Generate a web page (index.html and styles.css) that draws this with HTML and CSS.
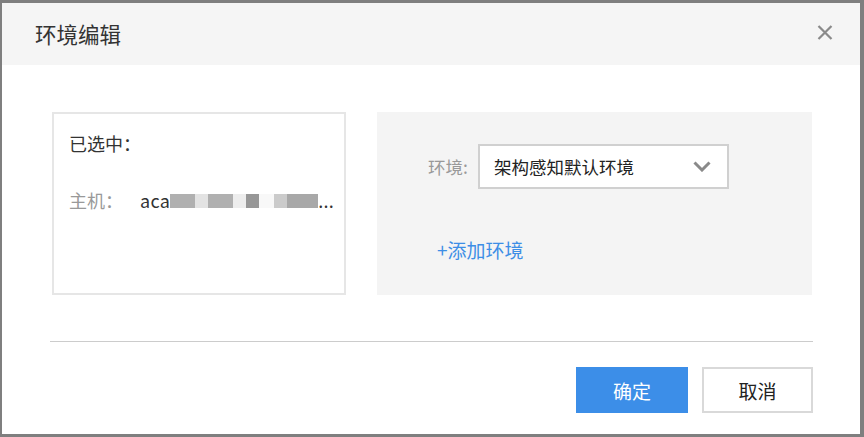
FILE: index.html
```html
<!DOCTYPE html>
<html>
	<head>
		<meta charset="UTF-8">
		<title>环境编辑</title>
		<link rel="stylesheet" href="styles.css">
	</head>
	<body>
		<div class="dialog">
			<div class="dlg-head">
				<span class="dlg-title">环境编辑</span>
				<span class="dlg-close">
					<svg width="16" height="15" viewBox="0 0 16 15"><path d="M1.5 1 L14.5 14 M14.5 1 L1.5 14" stroke="#8a8a8a" stroke-width="2.2" fill="none"/></svg>
				</span>
			</div>
			<div class="dlg-body">
				<div class="sel-box">
					<div class="sel-title">已选中：</div>
					<div class="host-row">
						<span class="host-label">主机：</span>
						<span class="host-val">aca<span class="mosaic"><i class="m1"></i><i class="m2"></i><i class="m1"></i><i class="m3"></i><i class="m4"></i><i class="m5"></i><i class="m6"></i><i class="m7"></i></span>...</span>
					</div>
				</div>
				<div class="env-panel">
					<div class="env-row">
						<span class="env-label">环境:</span>
						<div class="env-select">
							<span>架构感知默认环境</span>
							<svg width="18" height="11" viewBox="0 0 18 11"><path d="M1.5 1.5 L9 9 L16.5 1.5" stroke="#8a8a8a" stroke-width="3" fill="none"/></svg>
						</div>
					</div>
					<a class="add-env" href="#">+添加环境</a>
				</div>
			</div>
			<div class="dlg-foot">
				<input type="button" class="btn btn-ok" value="确定" />
				<input type="button" class="btn btn-cancel" value="取消" />
			</div>
		</div>
	</body>
</html>
```

FILE: styles.css
```css
html, body {
	margin: 0;
	padding: 0;
}

body {
	font-family: "Noto Sans CJK SC", "Liberation Sans", sans-serif;
	color: #333;
}

.dialog {
	width: 864px;
	height: 437px;
	box-sizing: border-box;
	border-style: solid;
	border-color: #7f7f7f;
	border-width: 3px 4px 3px 2px;
	background-color: #fff;
}

.dlg-head {
	height: 62px;
	background-color: #f5f5f5;
	display: flex;
	align-items: center;
	justify-content: space-between;
	padding: 0 27px 0 33px;
}

.dlg-title {
	font-size: 21.5px;
	color: #333;
	margin-top: -1px;
}

.dlg-close {
	display: flex;
	margin-top: -3px;
}

.dlg-body {
	display: flex;
	gap: 31px;
	padding: 47px 48px 0 50px;
}

.sel-box {
	width: 294px;
	height: 183px;
	box-sizing: border-box;
	border: 2px solid #e6e6e6;
	padding: 17px 0 0 15px;
	font-size: 18px;
	line-height: 24px;
}

.host-row {
	display: flex;
	margin-top: 33px;
}

.host-label {
	width: 71px;
	color: #999;
	flex-shrink: 0;
}

.host-val {
	display: flex;
	align-items: center;
	color: #333;
	letter-spacing: 0.3px;
}

.mosaic {
	display: flex;
	height: 14px;
	margin-top: 1px;
}

.mosaic i {
	display: block;
	height: 14px;
}

.m1 { width: 25px; background-color: #b0b0b0; }
.m2 { width: 13px; background-color: #e3e3e3; }
.m3 { width: 13px; background-color: #ededed; }
.m4 { width: 13px; background-color: #979797; }
.m5 { width: 15px; background-color: #f8f8f8; }
.m6 { width: 13px; background-color: #cbcbcb; }
.m7 { width: 31px; background-color: #a8a8a8; }

.env-panel {
	flex: 1;
	height: 183px;
	background-color: #f4f4f4;
	padding-top: 32px;
	box-sizing: border-box;
}

.env-row {
	display: flex;
	align-items: center;
	padding-left: 51px;
}

.env-label {
	width: 50px;
	font-size: 17.5px;
	color: #999;
}

.env-select {
	width: 251px;
	height: 45px;
	box-sizing: border-box;
	border: 2px solid #d0d0d0;
	background-color: #fff;
	display: flex;
	align-items: center;
	justify-content: space-between;
	padding: 0 16px 0 14px;
	font-size: 17.5px;
	color: #222;
}

.env-select svg {
	margin-top: -1px;
}

.add-env {
	display: block;
	margin: 49px 0 0 60px;
	font-size: 19px;
	line-height: 24px;
	color: #3d8ee6;
	text-decoration: none;
}

.dlg-foot {
	margin: 46px 47px 0 48px;
	border-top: 1px solid #cccccc;
	padding-top: 25px;
	display: flex;
	justify-content: flex-end;
	gap: 14px;
}

.btn {
	width: 112px;
	height: 46px;
	box-sizing: border-box;
	font-family: "Noto Sans CJK SC", "Liberation Sans", sans-serif;
	font-size: 19px;
	margin: 0;
	padding: 0;
}

.btn-ok {
	background-color: #3c8ee8;
	border: 1px solid #3c8ee8;
	color: #fff;
}

.btn-cancel {
	width: 111px;
	background-color: #fff;
	border: 2px solid #d9d9d9;
	color: #222;
}
```
